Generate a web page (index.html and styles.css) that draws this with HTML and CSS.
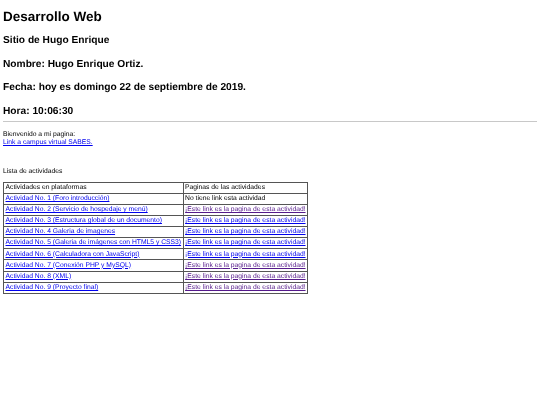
FILE: index.html
```html
<!DOCTYPE html>
<html lang="es">
  <head>
    <meta charset="UTF-8" />
    <title>Desarrollo Web</title>
    <link rel="stylesheet" href="styles.css">
  </head>
  <body>
    <h1>Desarrollo Web</h1>
    <h2>Sitio de Hugo Enrique</h2>
    <h2>Nombre: Hugo Enrique Ortiz.</h2>
    <h2>Fecha: hoy es domingo 22 de septiembre de 2019.</h2>
    <h2>Hora: 10:06:30</h2>
    <hr />
    <p class="welcome">Bienvenido a mi pagina:<br /><a href="#">Link a campus virtual SABES.</a></p>
    <p class="list-title">Lista de actividades</p>
    <table>
      <tr><td>Actividades en plataformas</td><td>Paginas de las actividades</td></tr>
      <tr><td><a href="#">Actividad No. 1 (Foro introducción)</a></td><td>No tiene link esta actividad</td></tr>
      <tr><td><a href="#">Actividad No. 2 (Servicio de hospedaje y menú)</a></td><td><a href="#" class="seen">¡Este link es la pagina de esta actividad!</a></td></tr>
      <tr><td><a href="#">Actividad No. 3 (Estructura global de un documento)</a></td><td><a href="#">¡Este link es la pagina de esta actividad!</a></td></tr>
      <tr><td><a href="#">Actividad No. 4 Galeria de imagenes</a></td><td><a href="#">¡Este link es la pagina de esta actividad!</a></td></tr>
      <tr><td><a href="#">Actividad No. 5 (Galeria de imágenes con HTML5 y CSS3)</a></td><td><a href="#">¡Este link es la pagina de esta actividad!</a></td></tr>
      <tr><td><a href="#">Actividad No. 6 (Calculadora con JavaScript)</a></td><td><a href="#">¡Este link es la pagina de esta actividad!</a></td></tr>
      <tr><td><a href="#">Actividad No. 7 (Conexión PHP y MySQL)</a></td><td><a href="#" class="seen">¡Este link es la pagina de esta actividad!</a></td></tr>
      <tr><td><a href="#">Actividad No. 8 (XML)</a></td><td><a href="#" class="seen">¡Este link es la pagina de esta actividad!</a></td></tr>
      <tr><td><a href="#">Actividad No. 9 (Proyecto final)</a></td><td><a href="#" class="seen">¡Este link es la pagina de esta actividad!</a></td></tr>
    </table>
  </body>
</html>
```

FILE: styles.css
```css
body {
  margin: 3px;
  font-family: "Liberation Sans", Arial, sans-serif;
  font-size: 6.75px;
  line-height: 7.75px;
  color: #000;
  text-rendering: geometricPrecision;
  filter: blur(0.35px);
}
h1 {
  margin: 6.5px 0 0;
  font-size: 13.5px;
  line-height: 14px;
}
h2 {
  margin: 11.6px 0 0;
  font-size: 10.2px;
  line-height: 12px;
}
hr {
  margin: 3px 0 0;
  border: 0;
  border-top: 1px solid #c8c8c8;
}
a {
  color: #0000ee;
}
a.seen {
  color: #551a8b;
}
.welcome {
  margin: 9px 0 0;
  line-height: 8.5px;
}
.list-title {
  margin: 20.4px 0 5.6px;
}
table {
  border-collapse: collapse;
}
td {
  border: 1px solid #555;
  padding: 1.2px 1.5px;
  white-space: nowrap;
}
```
